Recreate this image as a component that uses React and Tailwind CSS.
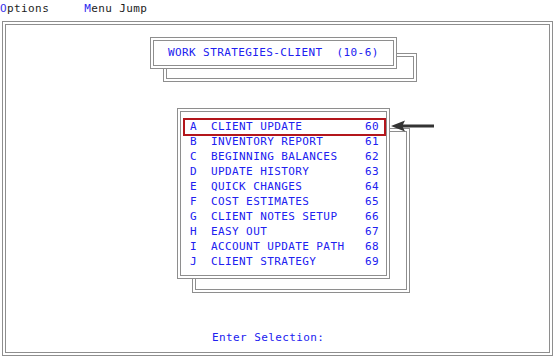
import React from 'react'

const items = [
  ['A', 'CLIENT UPDATE', '60'],
  ['B', 'INVENTORY REPORT', '61'],
  ['C', 'BEGINNING BALANCES', '62'],
  ['D', 'UPDATE HISTORY', '63'],
  ['E', 'QUICK CHANGES', '64'],
  ['F', 'COST ESTIMATES', '65'],
  ['G', 'CLIENT NOTES SETUP', '66'],
  ['H', 'EASY OUT', '67'],
  ['I', 'ACCOUNT UPDATE PATH', '68'],
  ['J', 'CLIENT STRATEGY', '69'],
]

const mono = "font-['DejaVu_Sans_Mono','Liberation_Mono',monospace] text-[11px] tracking-[0.4px]"

function Row({ item }) {
  const [key, label, num] = item
  return (
    <div className="flex h-[15px] items-center whitespace-pre">
      <span className="w-[21px]">{key}</span>
      <span className="w-[154px]">{label}</span>
      <span>{num}</span>
    </div>
  )
}

export default function App() {
  return (
    <div className={`w-[558px] h-[359px] bg-white overflow-hidden ${mono}`}>
      {/* Menu bar */}
      <div className="flex h-[21px] items-start pt-[1px] text-[#1c1c1c]">
        <span><span className="text-[#3a32e8]">O</span>ptions</span>
        <span className="ml-[35px]"><span className="text-[#2a2af0]">M</span>enu Jump</span>
      </div>

      {/* Screen frame */}
      <div className="ml-[2px] w-[551px] h-[335px] border-[4px] border-double border-[#8e8e8e] text-[#2020f0]">
        {/* Title box */}
        <div className="relative ml-[144px] mt-[12px] w-[247px] h-[32px]">
          <div className="absolute left-[13px] top-[16px] w-[254px] h-[29px] border-[4px] border-double border-[#8e8e8e]" />
          <div className="relative flex items-center h-full pl-[14px] bg-white border-[4px] border-double border-[#8e8e8e] whitespace-pre">
            WORK STRATEGIES-CLIENT  (10-6)
          </div>
        </div>

        {/* Menu box */}
        <div className="relative ml-[171px] mt-[39px] w-[213px] h-[171px]">
          <div className="absolute left-[15px] top-[20px] w-[218px] h-[165px] border-[4px] border-double border-[#8e8e8e]" />
          <div className="relative h-full pt-[8px] bg-white border-[4px] border-double border-[#8e8e8e]">
            {items.map((it, i) =>
              i === 0 ? (
                <div key={it[0]} className="ml-[2px] -mt-[2px] -mb-[1px] h-[18px] pl-[5px] border-2 border-[#b3161c] flex items-center">
                  <Row item={it} />
                </div>
              ) : (
                <div key={it[0]} className="pl-[9px]">
                  <Row item={it} />
                </div>
              )
            )}
          </div>
          {/* Pointer arrow */}
          <svg className="absolute left-[214px] top-[12px]" width="44" height="12" viewBox="0 0 44 12">
            <path d="M0 6 L14 0.5 L12 4.5 L43 4.5 L43 7.5 L12 7.5 L14 11.5 Z" fill="#333333" />
          </svg>
        </div>

        {/* Prompt */}
        <div className="ml-[206px] mt-[52px] h-[15px] flex items-center whitespace-pre">
          Enter Selection:
        </div>
      </div>
    </div>
  )
}
